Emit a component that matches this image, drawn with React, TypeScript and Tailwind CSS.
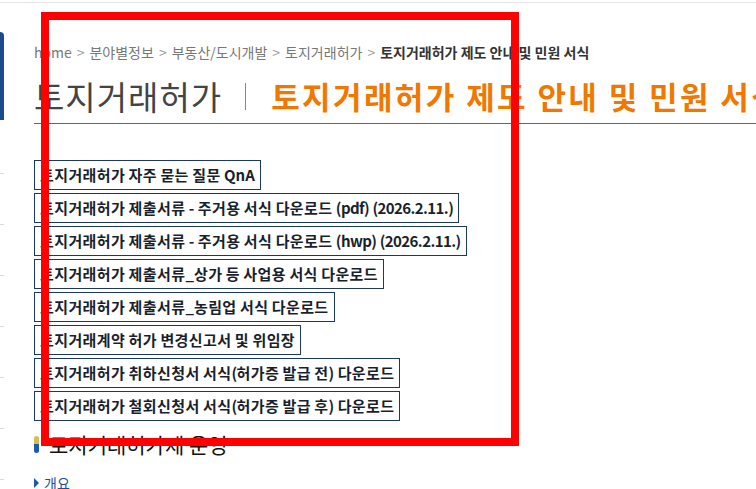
import React from "react";

const links = [
  "토지거래허가 자주 묻는 질문 QnA",
  "토지거래허가 제출서류 - 주거용 서식 다운로드 (pdf) (2026.2.11.)",
  "토지거래허가 제출서류 - 주거용 서식 다운로드 (hwp) (2026.2.11.)",
  "토지거래허가 제출서류_상가 등 사업용 서식 다운로드",
  "토지거래허가 제출서류_농림업 서식 다운로드",
  "토지거래계약 허가 변경신고서 및 위임장",
  "토지거래허가 취하신청서 서식(허가증 발급 전) 다운로드",
  "토지거래허가 철회신청서 서식(허가증 발급 후) 다운로드",
];

const crumbs = ["home", "분야별정보", "부동산/도시개발", "토지거래허가"];

// hangul runs set a touch wider, bracketed latin a touch tighter
function Spaced({ text }: { text: string }) {
  const parts = text.split(/([가-힣]+|\([a-z0-9.]+\))/);
  return (
    <span>
      {parts.map((p, i) => {
        if (/[가-힣]/.test(p))
          return (
            <span key={i} className="tracking-[0.4px]">
              {p}
            </span>
          );
        if (/^\(/.test(p))
          return (
            <span key={i} className="tracking-[-0.6px]">
              {p}
            </span>
          );
        return p;
      })}
    </span>
  );
}

export default function App() {
  return (
    <div
      className="relative h-[489px] w-[756px] overflow-hidden bg-white"
      style={{ fontFamily: '"Noto Sans CJK KR", "Noto Sans", sans-serif' }}
    >
      <div className="h-[3px] w-full border-b border-[#e6e6e6]" />

      <div className="flex">
        {/* left sidebar edge */}
        <div className="w-[5px] shrink-0">
          <div className="mt-[29px] h-[88px] w-[4px] rounded-tr-[4px] bg-[#1d4a8c]" />
          <div className="mt-[53px] flex flex-col gap-[50px]">
            {Array.from({ length: 7 }).map((_, i) => (
              <div key={i} className="h-px w-[4px] bg-[#dcdcdc]" />
            ))}
          </div>
        </div>

        <div className="min-w-0 flex-1 pl-[29px]">
          {/* breadcrumb */}
          <div className="mt-[40px] flex h-[18px] items-center whitespace-nowrap text-[14px] leading-[18px] text-[#777]">
            {crumbs.map((c) => (
              <span key={c} className="flex items-center">
                <span>{c}</span>
                <span className="mx-[5px] text-[#999]">&gt;</span>
              </span>
            ))}
            <span className="font-bold text-[#333]">토지거래허가 제도 안내 및 민원 서식</span>
          </div>

          {/* title */}
          <div className="mt-[15px] border-b border-[#666] pb-[7px]">
            <div className="flex h-[40px] items-center whitespace-nowrap">
              <span className="shrink-0 text-[33px] font-normal leading-[40px] tracking-[1px] text-[#444]">
                토지거래허가
              </span>
              <span className="ml-[23px] mr-[25px] h-[27px] w-px shrink-0 bg-[#888]" />
              <span className="shrink-0 text-[31px] font-bold leading-[40px] tracking-[2.4px] text-[#f07800]">
                토지거래허가 제도 안내 및 민원 서식
              </span>
            </div>
          </div>

          {/* link buttons */}
          <div className="mt-[36px] flex flex-col items-start gap-[3px]">
            {links.map((l) => (
              <div
                key={l}
                className="flex h-[30px] items-center whitespace-nowrap border border-[#1b3766] px-[5px] text-[15px] font-bold leading-[20px] text-[#1a1f2e]"
              >
                <Spaced text={l} />
              </div>
            ))}
          </div>

          {/* section heading */}
          <div className="mt-[12px] flex h-[22px] items-center gap-[10px]">
            <div className="flex h-[17px] w-[5px] flex-col overflow-hidden rounded-full">
              <div className="flex-1 bg-[#d8bb4f]" />
              <div className="flex-1 bg-[#1b5aa6]" />
            </div>
            <span className="text-[21px] leading-[22px] text-[#111]">토지거래허가제 운영</span>
          </div>

          <div className="mt-[19px] flex h-[18px] items-center gap-[5px]">
            <svg width="5" height="10" viewBox="0 0 5 10">
              <path d="M0 0 L5 5 L0 10 Z" fill="#1b5aa6" />
            </svg>
            <span className="text-[14px] leading-[18px] text-[#1b4fa0]">개요</span>
          </div>
        </div>
      </div>

      {/* red annotation frame */}
      <div className="pointer-events-none absolute left-[41px] top-[12px] h-[434px] w-[478px] border-[8px] border-[#ff0000]" />
    </div>
  );
}
